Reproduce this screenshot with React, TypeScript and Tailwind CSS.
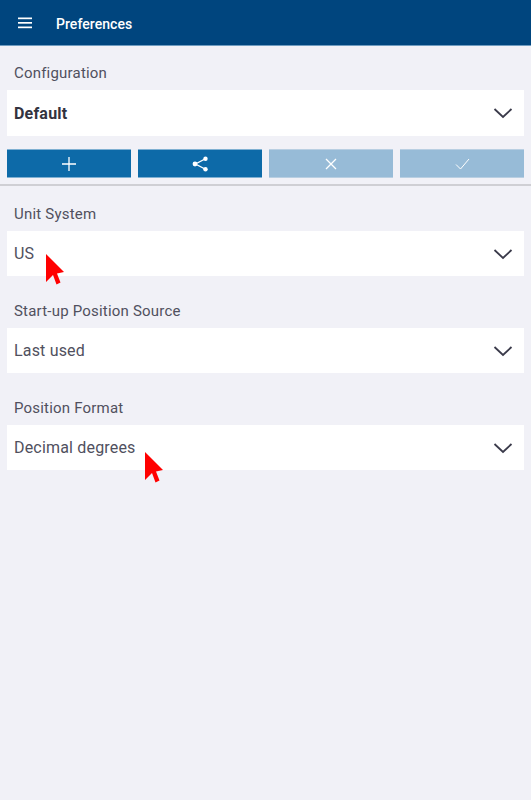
import React from "react";

const Chevron = () => (
  <svg width="20" height="12" viewBox="0 0 20 12" fill="none" stroke="#3a3a4a" strokeWidth="1.8" className="shrink-0">
    <path d="M1.5 2 L10 10 L18.5 2" />
  </svg>
);

// red pointer drawn over the rows
const Cursor = ({ className }: { className: string }) => (
  <svg width="19" height="32" viewBox="0 0 19 32" className={className}>
    <path d="M0 0 L18 18 L11 19.5 L14.5 28.5 L10.5 30.5 L7 21 L0 28 Z" fill="#ff0000" />
  </svg>
);

const Field = ({ label, value, children }: { label: string; value: string; children?: React.ReactNode }) => (
  <div>
    <div className="px-[14px] pb-[8px] leading-[18px] text-[15px] text-[#50505e] tracking-[0.2px]">{label}</div>
    <div className="mx-[7px] h-[45px] bg-white flex items-center justify-between pl-[7px] pr-[11px] relative">
      <span className="pt-[1px] text-[16px] text-[#50505e] tracking-[0.18px]">{value}</span>
      <Chevron />
      {children}
    </div>
  </div>
);

const ActionButton = ({ disabled, children }: { disabled?: boolean; children: React.ReactNode }) => (
  <button className={`flex-1 h-[29px] flex items-center justify-center border-b border-t ${disabled ? "bg-[#97bbd7] border-[#b9cfe2]" : "bg-[#0d6aa8] border-[#7fb0d2]"}`}>
    {children}
  </button>
);

export default function App() {
  return (
    <div className="w-[531px] h-[800px] bg-[#f1f1f7] font-['Roboto',sans-serif] overflow-hidden">
      <header className="h-[46px] bg-[#00457e] border-b border-[#6f9cc0] flex items-center pl-[18px]">
        <svg width="15" height="12" viewBox="0 0 15 12" fill="#fff">
          <rect y="0.5" width="14" height="1.7" />
          <rect y="5" width="14" height="1.7" />
          <rect y="9.5" width="14" height="1.7" />
        </svg>
        <h1 className="ml-[23px] pt-[3px] text-[14px] font-medium text-white tracking-[0.05px]">Preferences</h1>
      </header>

      <div className="border-b-2 border-[#cfcfd4] h-[140px]">
        <div className="px-[14px] h-[44px] pt-[10px] flex items-center text-[15px] text-[#50505e] tracking-[0.2px]">Configuration</div>
        <div className="mx-[7px] h-[46px] bg-white flex items-center justify-between pl-[7px] pr-[11px]">
          <span className="pt-[1px] text-[16px] font-bold text-[#33333f] tracking-[0.2px]">Default</span>
          <Chevron />
        </div>
        <div className="mx-[7px] mt-[13px] flex gap-[7px]">
          <ActionButton>
            <svg width="16" height="16" viewBox="0 0 16 16" stroke="#fff" strokeWidth="1.3"><path d="M8 1 V15 M1 8 H15" /></svg>
          </ActionButton>
          <ActionButton>
            <svg width="17" height="16" viewBox="0 0 17 16" fill="#fff" stroke="#fff">
              <path d="M13 3 L3.5 8 L13 13" fill="none" strokeWidth="1.4" />
              <circle cx="13.5" cy="2.8" r="2.2" stroke="none" />
              <circle cx="3" cy="8" r="2.4" stroke="none" />
              <circle cx="13.5" cy="13.2" r="2.2" stroke="none" />
            </svg>
          </ActionButton>
          <ActionButton disabled>
            <svg width="12" height="12" viewBox="0 0 12 12" stroke="#fff" strokeWidth="1.3"><path d="M1 1 L11 11 M11 1 L1 11" /></svg>
          </ActionButton>
          <ActionButton disabled>
            <svg width="15" height="12" viewBox="0 0 15 12" fill="none" stroke="#fff" strokeWidth="1"><path d="M1 6.5 L5.5 11 L14 1" /></svg>
          </ActionButton>
        </div>
      </div>

      <div className="pt-[19px] flex flex-col gap-[26px]">
        <Field label="Unit System" value="US">
          <Cursor className="absolute left-[39px] top-[23px]" />
        </Field>
        <Field label="Start-up Position Source" value="Last used" />
        <Field label="Position Format" value="Decimal degrees">
          <Cursor className="absolute left-[138px] top-[27px]" />
        </Field>
      </div>
    </div>
  );
}
